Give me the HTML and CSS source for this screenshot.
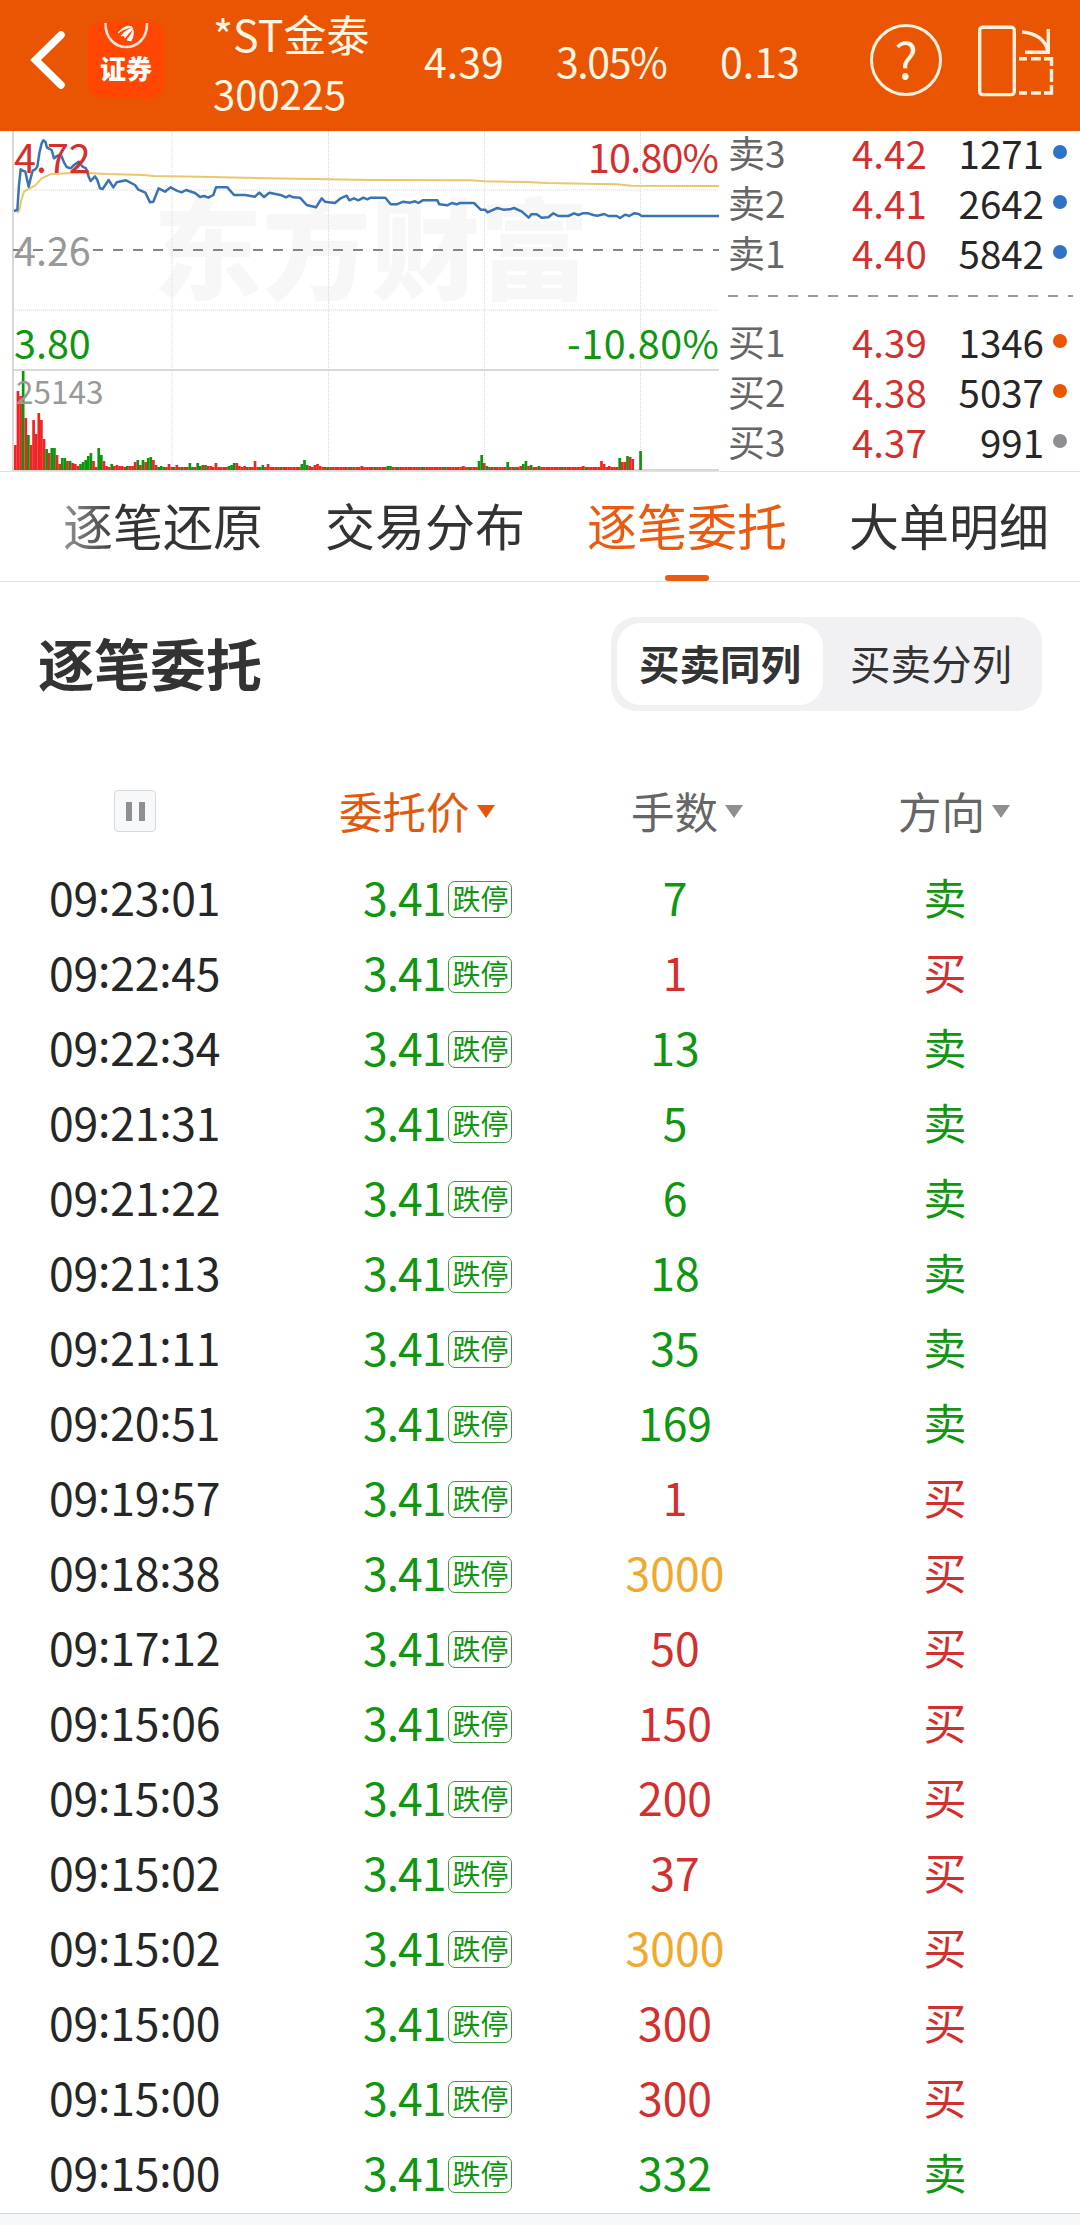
FILE: index.html
```html
<!DOCTYPE html>
<html lang="zh-CN">
<head>
    <meta charset="UTF-8">
    <meta name="viewport" content="width=device-width, initial-scale=1.0">
    <title>逐笔委托</title>
    <link rel="stylesheet" href="styles.css">
</head>
<body>
    <header class="topbar">
        <svg class="back" width="88" height="76" viewBox="0 0 88 76">
            <path d="M61 13L35.5 38L61 63" fill="none" stroke="#fff" stroke-width="7.5" stroke-linecap="round"/>
        </svg>
        <div class="logo">
            <svg width="75" height="30" viewBox="0 0 75 30">
                <path d="M16.5 1C16 33 58.5 33 58 1" fill="none" stroke="#ffe3d8" stroke-width="2.6"/>
                <path d="M29 11C34 5 39 3 43 5C37 6 33 8 29 11ZM32 14C36 9 40 7 44 6C42 10 39 11 36 16C36 14 35 13 32 14ZM38 18C41 14 43 11 44 8C45 13 43 17 42 19Z" fill="#fff" stroke="#fff"/>
            </svg>
            <span>证券</span>
        </div>
        <div class="stock">
            <div class="stock-name">*ST金泰</div>
            <div class="stock-code">300225</div>
        </div>
        <div class="quote">4.39</div>
        <div class="quote quote-pct">3.05%</div>
        <div class="quote">0.13</div>
        <div class="help">?</div>
        <svg class="rotate" width="80" height="76" viewBox="0 0 80 76" fill="none" stroke="#fff1dc" stroke-width="3.4">
            <rect x="1.7" y="5.2" width="34.6" height="67.4" rx="3"/>
            <path d="M44 10C58 11 68 18 70 30M70.3 7V31.5M47 30.3H72"/>
            <path d="M41 36.7H49M53 36.7H63M66 36.7H73.5V44M73.5 47V60M73.5 63V71H66M63 71H53M49 71H41"/>
        </svg>
    </header>

    <section class="market">
        <svg class="chart" width="720" height="340" viewBox="0 0 720 340">
            <text class="watermark" x="153" y="160">东方财富</text>
            <g class="grid">
                <path d="M172 0V340M328.5 0V340M484.5 0V340M640.5 0V340"/>
                <path d="M13 59H719M13 179H719"/>
            </g>
            <path class="frame" d="M13 0V340M13 239H719M13 339H719"/>
            <path class="mid" d="M13 119H719"/>
            <g id="volume"></g>
            <g transform="translate(0 -6) scale(.33333)" fill="none" stroke-linejoin="round">
                <polyline class="avg" points="52,265 58,255 64,225 72,200 85,192 105,182 125,160 150,148 200,145 260,144 320,147 430,150 460,153 600,155 800,160 985,163 1110,165 1410,166 1455,169 1580,171 1640,174 1800,177 1850,178 1895,182 2157,183"/>
                <polyline class="price-line" points="42,258 52,255 57,180 62,133 68,137 76,140 80,158 86,185 92,160 98,137 106,133 112,125 118,85 125,55 130,46 136,50 141,68 155,75 162,100 172,92 184,92 192,112 200,126 212,130 222,120 236,110 248,125 258,130 266,155 272,168 285,154 292,165 300,190 308,192 326,165 340,187 350,172 378,166 405,180 415,194 436,203 450,232 460,230 476,190 495,200 512,187 530,197 545,202 558,195 585,204 600,216 612,213 625,218 640,210 648,187 682,187 702,210 735,210 765,215 778,203 792,216 808,203 845,211 858,217 868,212 880,217 900,218 920,240 948,247 965,220 975,230 1005,234 1022,220 1040,212 1048,226 1062,220 1075,226 1090,218 1102,223 1112,218 1156,218 1172,238 1190,238 1210,230 1230,233 1245,229 1255,234 1268,226 1312,226 1318,238 1342,241 1355,234 1370,238 1380,234 1422,234 1442,254 1456,254 1462,262 1492,249 1510,254 1530,253 1542,249 1566,260 1586,278 1594,268 1610,268 1625,278 1645,277 1660,265 1675,273 1705,273 1722,265 1735,270 1748,265 1765,265 1780,270 1792,272 1813,267 1825,273 1850,273 1860,279 1875,269 1888,273 1902,265 1916,267 1925,273 2157,273"/>
            </g>
            <text class="label down" x="14" y="228">3.80</text>
            <text class="label down" x="719" y="228" text-anchor="end" textLength="152">-10.80%</text>
            <text class="label up" x="14" y="42">4.72</text>
            <text class="label up" x="719" y="42" text-anchor="end" textLength="131">10.80%</text>
            <text class="label flat" x="14" y="135">4.26</text>
            <text class="label small" x="16" y="273">25143</text>
        </svg>

        <div class="book">
            <div class="level"><span class="side">卖3</span><span class="bid">4.42</span><span class="vol">1271</span><i class="dot blue"></i></div>
            <div class="level"><span class="side">卖2</span><span class="bid">4.41</span><span class="vol">2642</span><i class="dot blue"></i></div>
            <div class="level"><span class="side">卖1</span><span class="bid">4.40</span><span class="vol">5842</span><i class="dot blue"></i></div>
            <div class="divider"></div>
            <div class="level"><span class="side">买1</span><span class="bid">4.39</span><span class="vol">1346</span><i class="dot orange"></i></div>
            <div class="level"><span class="side">买2</span><span class="bid">4.38</span><span class="vol">5037</span><i class="dot orange"></i></div>
            <div class="level"><span class="side">买3</span><span class="bid">4.37</span><span class="vol">991</span><i class="dot gray"></i></div>
        </div>
    </section>

    <nav class="tabs">
        <span class="tab">逐笔还原</span>
        <span class="tab">交易分布</span>
        <span class="tab active">逐笔委托</span>
        <span class="tab">大单明细</span>
    </nav>

    <main>
        <div class="title-row">
            <h1>逐笔委托</h1>
            <div class="switch">
                <span class="option selected">买卖同列</span>
                <span class="option">买卖分列</span>
            </div>
        </div>

        <div class="table-head">
            <div class="pause"></div>
            <div class="head-cell sorted">委托价</div>
            <div class="head-cell">手数</div>
            <div class="head-cell">方向</div>
        </div>
        <div class="orders" id="orders"></div>
    </main>

    <script>
        const orders = [
            ["09:23:01", 7, "卖"],
            ["09:22:45", 1, "买"],
            ["09:22:34", 13, "卖"],
            ["09:21:31", 5, "卖"],
            ["09:21:22", 6, "卖"],
            ["09:21:13", 18, "卖"],
            ["09:21:11", 35, "卖"],
            ["09:20:51", 169, "卖"],
            ["09:19:57", 1, "买"],
            ["09:18:38", 3000, "买"],
            ["09:17:12", 50, "买"],
            ["09:15:06", 150, "买"],
            ["09:15:03", 200, "买"],
            ["09:15:02", 37, "买"],
            ["09:15:02", 3000, "买"],
            ["09:15:00", 300, "买"],
            ["09:15:00", 300, "买"],
            ["09:15:00", 332, "卖"]
        ];

        document.getElementById("orders").innerHTML = orders.map(([time, lots, side]) => {
            const color = side === "买" ? "up" : "down";
            const lotsColor = lots >= 1000 ? "big" : color;
            return `<div class="order">
                <span class="time">${time.replaceAll(":", "<b>:</b>")}</span>
                <span class="price down">3.41<em class="tag">跌停</em></span>
                <span class="lots ${lotsColor}">${lots}</span>
                <span class="direction ${color}">${side}</span>
            </div>`;
        }).join("");

        // One bar per minute: r = up, g = down, followed by the height
        const opening = ("r25 r79 r74 g99 r52 g35 r25 r50 r36 r57 r50 r31 g21 r17 g22 g22 r15 r6 g12 g12 r9 g9 r7 r6 r4 " +
            "g6 g8 g10 g14 g17 r9 r3 g22 g15 r9 r4 r3 g6 r4 r5 r4 r4 r3 g4 r4 r4 r8 g10 r5 g10 r8 g12 g13 r10 r5 " +
            "g3 g4 g3 r3 r6 r3 g3 r5 r3 g3 r3 r3 g7 g3 r3 g7 g4 r5 g5 r4 r4 r3 r7 r3 r3 r3 r3 g4 g5 g7 r7 r4 r3 " +
            "r4 g3 r3 r3 r9 r3 g3 g5 r3 r6").split(" ");
        const spikes = {
            110: "g6", 111: "g10", 112: "g5", 113: "r4", 115: "r5", 116: "r6", 117: "r4", 133: "r4", 143: "g4",
            144: "g4", 172: "r4", 178: "g9", 179: "g15", 180: "r7", 181: "g4", 189: "g8", 194: "r4", 195: "g6",
            196: "g9", 197: "r4", 198: "g5", 201: "g4", 218: "r4", 225: "r9", 226: "r6", 228: "r4", 232: "g12",
            233: "r8", 234: "r8", 235: "g14", 236: "r13", 237: "r11", 238: "r0", 239: "r0", 240: "g19"
        };
        let bars = "";
        for (let i = 0; i <= 240; i++) {
            const bar = opening[i] || spikes[i] || (i % 9 === 3 ? "g3" : "r3");
            const height = Number(bar.slice(1));
            const fill = bar[0] === "r" ? "#ef2424" : "#0b970b";
            bars += `<rect x="${(14 + i * 2.605).toFixed(2)}" y="${339 - height}" width="2.7" height="${height}" fill="${fill}"/>`;
        }
        document.getElementById("volume").innerHTML = bars;
    </script>
</body>
</html>
```
FILE: styles.css
```css
* {
    box-sizing: border-box;
}

body {
    margin: 0;
    width: 1080px;
    height: 2225px;
    overflow: hidden;
    background: #f6f8fa;
    color: #262626;
    font-family: "Noto Sans CJK SC", "Noto Sans", sans-serif;
    white-space: nowrap;
}

.up {
    color: #d32f2f;
    fill: #d32f2f;
}

.down {
    color: #109610;
    fill: #109610;
}

.big {
    color: #f0a92c;
}

/* Top bar */
.topbar {
    display: grid;
    grid-template-columns: 88px 125px 211px 132px 164px 150px 108px 1fr;
    grid-template-rows: 120px;
    align-items: center;
    height: 131px;
    background: #ea5504;
    color: #fff6e4;
}

.logo {
    display: flex;
    flex-direction: column;
    align-items: center;
    width: 76px;
    height: 76px;
    border-radius: 14px;
    background: #ff4602;
    color: #fff;
    font-size: 26px;
    font-weight: 900;
    line-height: 32px;
}

.logo svg {
    flex: none;
}

.stock {
    padding-top: 6px;
}

.stock-name {
    font-size: 43px;
    line-height: 60px;
}

.stock-code {
    font-size: 40px;
    line-height: 60px;
}

.quote {
    padding-bottom: 1px;
    font-size: 41px;
    line-height: 60px;
}

.quote-pct {
    letter-spacing: -1.4px;
}

.help {
    width: 72px;
    height: 72px;
    border: 3.5px solid #fff1dc;
    border-radius: 50%;
    font-size: 50px;
    line-height: 60px;
    text-align: center;
}

/* Chart and order book */
.market {
    display: flex;
    height: 341px;
    border-bottom: 1px solid #e2e2e2;
    background: #fff;
}

.chart {
    flex: none;
}

.watermark {
    font-size: 109px;
    font-weight: 900;
    fill: #f7f7f7;
}

.grid {
    fill: none;
    stroke: #d9d9d9;
    stroke-dasharray: 1 1;
}

.frame {
    fill: none;
    stroke: #d8d8d8;
    stroke-width: 2;
}

.mid {
    stroke: #858585;
    stroke-width: 2;
    stroke-dasharray: 10 10;
}

.label {
    font-size: 39.5px;
}

.flat,
.small {
    fill: #999;
}

.small {
    font-size: 31.5px;
}

.avg {
    stroke: #eac66c;
    stroke-width: 6;
}

.price-line {
    stroke: #3a73b4;
    stroke-width: 7.5;
}

.book {
    flex: 1;
    padding: 0 7px 0 8px;
}

.level {
    display: grid;
    grid-template-columns: 124px 76px 116px 1fr;
    align-items: center;
    height: 50px;
    position: relative;
    top: -4px;
    font-size: 38.5px;
    line-height: 50px;
}

.side {
    color: #666;
    font-size: 37px;
}

.bid {
    color: #d32f2f;
}

.vol {
    text-align: right;
}

.dot {
    width: 14px;
    height: 14px;
    margin: 0 0 0 9px;
    border-radius: 50%;
}

.blue {
    background: #3072c4;
}

.orange {
    background: #ea5504;
}

.gray {
    background: #8e8e93;
}

.divider {
    height: 2px;
    margin: 14px 0 23px;
    background: repeating-linear-gradient(to right, #999 0 10px, transparent 10px 20px);
}

/* Tabs */
.tabs {
    position: relative;
    display: flex;
    gap: 62px;
    height: 110px;
    padding-left: 63px;
    border-bottom: 1px solid #e2e2e2;
    background: #fff;
    font-size: 50px;
    line-height: 104px;
    color: #333;
}

.tabs::before {
    content: "";
    position: absolute;
    left: 0;
    top: 0;
    width: 120px;
    height: 100px;
    background: linear-gradient(to right, #fff, rgba(255, 255, 255, 0));
}

.tab {
    width: 200px;
}

.active {
    position: relative;
    color: #ea5a10;
}

.active::after {
    content: "";
    position: absolute;
    left: 78px;
    bottom: 0;
    width: 44px;
    height: 6px;
    border-radius: 3px;
    background: #ea5a10;
}

/* Order list */
main {
    height: 1632px;
    padding-top: 35px;
    border-bottom: 1px solid #d3d8dc;
    background: #fff;
}

.title-row {
    display: flex;
    justify-content: space-between;
    height: 94px;
    padding: 0 38px;
    color: #333;
}

h1 {
    margin: 0;
    font-size: 56px;
    line-height: 89px;
}

.switch {
    display: flex;
    width: 431px;
    padding: 6px;
    border-radius: 25px;
    background: #f1f1f4;
}

.option {
    flex: 1;
    padding-left: 3px;
    font-size: 40.5px;
    line-height: 79px;
    text-align: center;
}

.selected {
    flex: none;
    width: 206px;
    padding: 0;
    border-radius: 24px;
    background: #fff;
    font-weight: 600;
}

.table-head {
    display: grid;
    grid-template-columns: 225px 292px 267px 1fr;
    height: 42px;
    margin: 79px 0 27px;
    padding-left: 114px;
    color: #666;
    font-size: 43.5px;
    line-height: 41px;
}

.pause {
    display: flex;
    align-items: center;
    justify-content: center;
    gap: 7px;
    width: 42px;
    height: 42px;
    border: 1px solid #d6dade;
    border-radius: 4px;
    background: #f6f8fa;
}

.pause::before,
.pause::after {
    content: "";
    width: 6px;
    height: 19px;
    background: #8e8e93;
}

.head-cell::after {
    content: "";
    display: inline-block;
    margin-left: 7px;
    border: 9.5px solid transparent;
    border-top: 13px solid #8e8e93;
    border-bottom: 0;
    vertical-align: 11px;
}

.sorted {
    color: #e2590e;
}

.sorted::after {
    border-top-color: #ea5504;
}

.order {
    display: grid;
    grid-template-columns: 314px 177px 270px 1fr;
    height: 75px;
    padding-left: 49px;
    font-size: 44.5px;
    line-height: 75px;
}

.time {
    letter-spacing: -0.2px;
}

.time b {
    position: relative;
    top: -4px;
    font-weight: 400;
}

.price {
    display: flex;
    align-items: center;
    letter-spacing: -1px;
}

.tag {
    width: 64px;
    height: 37px;
    margin: 6px 0 0 3px;
    border: 1px solid #3f9a3f;
    border-radius: 7px;
    font-size: 28px;
    font-style: normal;
    letter-spacing: 0;
    line-height: 33px;
    text-align: center;
}

.lots,
.direction {
    text-align: center;
}

.direction {
    font-size: 43px;
}
```
